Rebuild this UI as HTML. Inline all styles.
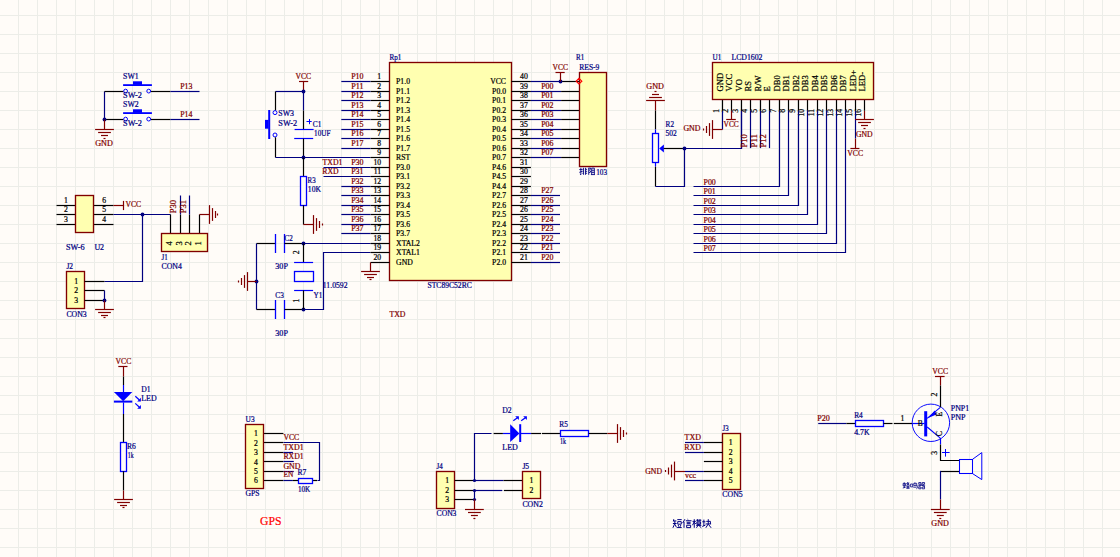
<!DOCTYPE html>
<html><head><meta charset="utf-8"><title>Schematic</title>
<style>
html,body{margin:0;padding:0;background:#FFFCF8;}
body{width:1120px;height:557px;overflow:hidden;}
svg{display:block;font-family:"Liberation Serif",serif;font-size:7.7px;}
svg text{white-space:pre;stroke-width:0.22px;}
svg path{fill:none;}
</style></head><body>
<svg width="1120" height="557" viewBox="0 0 1120 557">
<rect width="1120" height="557" fill="#FFFCF8"/>
<path d="M18.5 0V557M37.5 0V557M56.5 0V557M75.5 0V557M94.5 0V557M113.5 0V557M132.5 0V557M151.5 0V557M170.5 0V557M189.5 0V557M208.5 0V557M227.5 0V557M246.5 0V557M265.5 0V557M284.5 0V557M303.5 0V557M322.5 0V557M341.5 0V557M360.5 0V557M379.5 0V557M398.5 0V557M417.5 0V557M436.5 0V557M455.5 0V557M474.5 0V557M493.5 0V557M512.5 0V557M531.5 0V557M550.5 0V557M569.5 0V557M588.5 0V557M607.5 0V557M626.5 0V557M645.5 0V557M664.5 0V557M683.5 0V557M702.5 0V557M721.5 0V557M740.5 0V557M759.5 0V557M778.5 0V557M797.5 0V557M817.5 0V557M836.5 0V557M855.5 0V557M874.5 0V557M893.5 0V557M912.5 0V557M931.5 0V557M950.5 0V557M969.5 0V557M988.5 0V557M1007.5 0V557M1026.5 0V557M1045.5 0V557M1064.5 0V557M1083.5 0V557M1102.5 0V557M0 15.5H1120M0 34.5H1120M0 53.5H1120M0 72.5H1120M0 91.5H1120M0 110.5H1120M0 129.5H1120M0 148.5H1120M0 167.5H1120M0 186.5H1120M0 205.5H1120M0 224.5H1120M0 243.5H1120M0 262.5H1120M0 281.5H1120M0 300.5H1120M0 319.5H1120M0 338.5H1120M0 357.5H1120M0 376.5H1120M0 395.5H1120M0 414.5H1120M0 433.5H1120M0 452.5H1120M0 471.5H1120M0 490.5H1120M0 509.5H1120M0 528.5H1120M0 547.5H1120" stroke="#ECEDE8" stroke-width="1" shape-rendering="crispEdges"/>
<path d="M104.5 91.5L104.5 119.5" stroke="#000080" stroke-width="1.2"/>
<path d="M104.5 91.5L123.4 91.5" stroke="#000000" stroke-width="1.2"/>
<circle cx="125.6" cy="91.1" r="1.9" fill="none" stroke="#0000FF" stroke-width="1"/>
<circle cx="148.7" cy="91.1" r="1.9" fill="none" stroke="#0000FF" stroke-width="1"/>
<path d="M151 91.5L170.5 91.5" stroke="#000000" stroke-width="1.2"/>
<path d="M170.5 91.5L199.5 91.5" stroke="#000080" stroke-width="1.2"/>
<path d="M123.1 85.1L151.9 85.1" stroke="#0000FF" stroke-width="1.8"/>
<rect x="133" y="81.3" width="9" height="3.6" fill="#0000FF"/>
<text x="123.1" y="79.1" fill="#000080" stroke="#000080" textLength="15.6" lengthAdjust="spacingAndGlyphs">SW1</text>
<text x="123.1" y="98.4" fill="#000080" stroke="#000080" textLength="18.9" lengthAdjust="spacingAndGlyphs">SW-2</text>
<text x="180.2" y="89" fill="#800000" stroke="#800000" textLength="12.2" lengthAdjust="spacingAndGlyphs">P13</text>
<path d="M104.5 119.5L123.4 119.5" stroke="#000000" stroke-width="1.2"/>
<circle cx="125.6" cy="119.1" r="1.9" fill="none" stroke="#0000FF" stroke-width="1"/>
<circle cx="148.7" cy="119.1" r="1.9" fill="none" stroke="#0000FF" stroke-width="1"/>
<path d="M151 119.5L170.5 119.5" stroke="#000000" stroke-width="1.2"/>
<path d="M170.5 119.5L199.5 119.5" stroke="#000080" stroke-width="1.2"/>
<path d="M123.1 113.1L151.9 113.1" stroke="#0000FF" stroke-width="1.8"/>
<rect x="133" y="109.3" width="9" height="3.6" fill="#0000FF"/>
<text x="123.1" y="107.1" fill="#000080" stroke="#000080" textLength="15.6" lengthAdjust="spacingAndGlyphs">SW2</text>
<text x="123.1" y="126.4" fill="#000080" stroke="#000080" textLength="18.9" lengthAdjust="spacingAndGlyphs">SW-2</text>
<text x="180.2" y="117" fill="#800000" stroke="#800000" textLength="12.2" lengthAdjust="spacingAndGlyphs">P14</text>
<circle cx="104.5" cy="119.5" r="1.9" fill="#000080"/>
<path d="M104.5 119.5L104.5 129.5" stroke="#800000" stroke-width="1.2"/>
<path d="M95.1 129.5L113.9 129.5" stroke="#800000" stroke-width="1.2"/>
<path d="M98.1 132.5L110.9 132.5" stroke="#800000" stroke-width="1.2"/>
<path d="M101 135.5L108 135.5" stroke="#800000" stroke-width="1.2"/>
<path d="M103.5 138.5L105.5 138.5" stroke="#800000" stroke-width="1.2"/>
<text x="95.2" y="145.8" fill="#800000" stroke="#800000" textLength="17.6" lengthAdjust="spacingAndGlyphs">GND</text>
<path d="M56.5 205.5L75.6 205.5" stroke="#000000" stroke-width="1.2"/>
<path d="M93.8 205.5L113.5 205.5" stroke="#000000" stroke-width="1.2"/>
<text x="65.8" y="203.1" fill="#000000" stroke="#000000" text-anchor="middle">1</text>
<text x="104.2" y="203.1" fill="#000000" stroke="#000000" text-anchor="middle">6</text>
<path d="M56.5 214.5L75.6 214.5" stroke="#000000" stroke-width="1.2"/>
<path d="M93.8 214.5L113.5 214.5" stroke="#000000" stroke-width="1.2"/>
<text x="65.8" y="212.1" fill="#000000" stroke="#000000" text-anchor="middle">2</text>
<text x="104.2" y="212.1" fill="#000000" stroke="#000000" text-anchor="middle">5</text>
<path d="M56.5 224.5L75.6 224.5" stroke="#000000" stroke-width="1.2"/>
<path d="M93.8 224.5L113.5 224.5" stroke="#000000" stroke-width="1.2"/>
<text x="65.8" y="222.1" fill="#000000" stroke="#000000" text-anchor="middle">3</text>
<text x="104.2" y="222.1" fill="#000000" stroke="#000000" text-anchor="middle">4</text>
<rect x="75.5" y="195.5" width="18" height="37" fill="#FFFFB0" stroke="#800000" stroke-width="1.35"/>
<path d="M113.5 205.5L123.5 205.5" stroke="#800000" stroke-width="1.2"/>
<path d="M123.5 200.9L123.5 210.1" stroke="#800000" stroke-width="1.2"/>
<text x="125.5" y="206.6" fill="#800000" stroke="#800000" textLength="15.6" lengthAdjust="spacingAndGlyphs">VCC</text>
<path d="M113.5 214.5L170.5 214.5" stroke="#000080" stroke-width="1.2"/>
<circle cx="142.5" cy="214.5" r="1.9" fill="#000080"/>
<path d="M142.5 214.5L142.5 281.5L104.5 281.5" stroke="#000080" stroke-width="1.2" fill="none" stroke-linejoin="miter"/>
<text x="66" y="249.6" fill="#000080" stroke="#000080" textLength="18.7" lengthAdjust="spacingAndGlyphs">SW-6</text>
<text x="94.4" y="249.6" fill="#000080" stroke="#000080" textLength="9.7" lengthAdjust="spacingAndGlyphs">U2</text>
<path d="M170.5 214.5L170.5 233.4" stroke="#000000" stroke-width="1.2"/>
<path d="M180.5 214.5L180.5 233.4" stroke="#000000" stroke-width="1.2"/>
<path d="M189.5 214.5L189.5 233.4" stroke="#000000" stroke-width="1.2"/>
<path d="M199.5 214.5L199.5 233.4" stroke="#000000" stroke-width="1.2"/>
<path d="M180.5 195.5L180.5 214.5" stroke="#000080" stroke-width="1.2"/>
<path d="M189.5 195.5L189.5 214.5" stroke="#000080" stroke-width="1.2"/>
<rect x="161.5" y="233.5" width="46" height="18" fill="#FFFFB0" stroke="#800000" stroke-width="1.35"/>
<text x="171.7" y="245.4" fill="#000000" stroke="#000000" transform="rotate(-90 171.7 245.4)" font-size="8.5" stroke-width="0.18">4</text>
<text x="181.7" y="245.4" fill="#000000" stroke="#000000" transform="rotate(-90 181.7 245.4)" font-size="8.5" stroke-width="0.18">3</text>
<text x="190.7" y="245.4" fill="#000000" stroke="#000000" transform="rotate(-90 190.7 245.4)" font-size="8.5" stroke-width="0.18">2</text>
<text x="200.7" y="245.4" fill="#000000" stroke="#000000" transform="rotate(-90 200.7 245.4)" font-size="8.5" stroke-width="0.18">1</text>
<path d="M199.5 214.5L209.2 214.5" stroke="#800000" stroke-width="1.2"/>
<path d="M209.5 205.1L209.5 223.9" stroke="#800000" stroke-width="1.2"/>
<path d="M212.5 208.1L212.5 220.9" stroke="#800000" stroke-width="1.2"/>
<path d="M215.5 211L215.5 218" stroke="#800000" stroke-width="1.2"/>
<path d="M217.5 213.5L217.5 215.5" stroke="#800000" stroke-width="1.2"/>
<text x="175.9" y="213.3" fill="#800000" stroke="#800000" transform="rotate(-90 175.9 213.3)" textLength="13.2" lengthAdjust="spacingAndGlyphs" stroke-width="0.18">P30</text>
<text x="185.7" y="213.3" fill="#800000" stroke="#800000" transform="rotate(-90 185.7 213.3)" textLength="13.2" lengthAdjust="spacingAndGlyphs" stroke-width="0.18">P31</text>
<text x="161.5" y="260" fill="#000080" stroke="#000080" textLength="6.2" lengthAdjust="spacingAndGlyphs">J1</text>
<text x="161.5" y="268.8" fill="#000080" stroke="#000080" textLength="20.3" lengthAdjust="spacingAndGlyphs">CON4</text>
<rect x="66.5" y="271.5" width="18" height="37" fill="#FFFFB0" stroke="#800000" stroke-width="1.35"/>
<path d="M84.6 281.5L104.5 281.5" stroke="#000000" stroke-width="1.2"/>
<text x="76.2" y="284.1" fill="#000000" stroke="#000000" text-anchor="middle">1</text>
<path d="M84.6 290.5L104.5 290.5" stroke="#000000" stroke-width="1.2"/>
<text x="76.2" y="293.1" fill="#000000" stroke="#000000" text-anchor="middle">2</text>
<path d="M84.6 300.5L104.5 300.5" stroke="#000000" stroke-width="1.2"/>
<text x="76.2" y="303.1" fill="#000000" stroke="#000000" text-anchor="middle">3</text>
<path d="M104.5 290.5L104.5 300.5" stroke="#000080" stroke-width="1.2"/>
<circle cx="104.5" cy="300.5" r="1.9" fill="#000080"/>
<path d="M104.5 300.5L104.5 309.5" stroke="#800000" stroke-width="1.2"/>
<path d="M95.1 309.5L113.9 309.5" stroke="#800000" stroke-width="1.2"/>
<path d="M98.1 312.5L110.9 312.5" stroke="#800000" stroke-width="1.2"/>
<path d="M101 315.5L108 315.5" stroke="#800000" stroke-width="1.2"/>
<path d="M103.5 317.5L105.5 317.5" stroke="#800000" stroke-width="1.2"/>
<text x="66.4" y="268.9" fill="#000080" stroke="#000080" textLength="6.6" lengthAdjust="spacingAndGlyphs">J2</text>
<text x="66.4" y="316.6" fill="#000080" stroke="#000080" textLength="20.3" lengthAdjust="spacingAndGlyphs">CON3</text>
<text x="295.5" y="78.9" fill="#800000" stroke="#800000" textLength="15.6" lengthAdjust="spacingAndGlyphs">VCC</text>
<path d="M299 81.5L308.2 81.5" stroke="#800000" stroke-width="1.2"/>
<path d="M303.5 81.5L303.5 91.5" stroke="#800000" stroke-width="1.2"/>
<path d="M275.5 91.5L303.4 91.5" stroke="#000080" stroke-width="1.2"/>
<path d="M303.5 91.5L303.5 110.5" stroke="#000080" stroke-width="1.2"/>
<circle cx="303.5" cy="91.5" r="1.9" fill="#000080"/>
<path d="M303.5 110.5L303.5 129.5" stroke="#000000" stroke-width="1.2"/>
<path d="M294.6 129.5L313.6 129.5" stroke="#0000FF" stroke-width="1.2"/>
<path d="M294.2 138.5L313.2 138.5" stroke="#0000FF" stroke-width="1.2"/>
<path d="M303.5 138.7L303.5 157.5" stroke="#000000" stroke-width="1.2"/>
<path d="M275.5 91.5L275.5 110.5" stroke="#000000" stroke-width="1.2"/>
<circle cx="275" cy="112.6" r="2" fill="none" stroke="#0000FF" stroke-width="1"/>
<circle cx="275" cy="135" r="2" fill="none" stroke="#0000FF" stroke-width="1"/>
<path d="M275.5 137.3L275.5 157.5" stroke="#000000" stroke-width="1.2"/>
<path d="M269.2 110L269.2 139" stroke="#0000FF" stroke-width="2"/>
<rect x="265" y="119.9" width="3.6" height="8.8" fill="#0000FF"/>
<text x="278.3" y="115.9" fill="#000080" stroke="#000080" textLength="15.7" lengthAdjust="spacingAndGlyphs">SW3</text>
<text x="278.3" y="125.7" fill="#000080" stroke="#000080" textLength="18.8" lengthAdjust="spacingAndGlyphs">SW-2</text>
<path d="M306.5 121.5L311.7 121.5" stroke="#0000FF" stroke-width="1"/>
<path d="M309.5 119L309.5 124.2" stroke="#0000FF" stroke-width="1"/>
<text x="312.8" y="126.6" fill="#000080" stroke="#000080" textLength="8.6" lengthAdjust="spacingAndGlyphs">C1</text>
<text x="314.1" y="135.8" fill="#000080" stroke="#000080" textLength="16.3" lengthAdjust="spacingAndGlyphs">10UF</text>
<path d="M275.5 157.5L370.5 157.5" stroke="#000080" stroke-width="1.2"/>
<circle cx="303.5" cy="157.5" r="1.9" fill="#000080"/>
<path d="M303.5 157.5L303.5 176.5" stroke="#000000" stroke-width="1.2"/>
<rect x="300.5" y="176.5" width="6" height="29" fill="#FFFCF8" stroke="#0000FF" stroke-width="1.3"/>
<path d="M303.5 205.3L303.5 224.5" stroke="#000000" stroke-width="1.2"/>
<path d="M303.4 224.5L313.5 224.5" stroke="#800000" stroke-width="1.2"/>
<path d="M313.5 215.1L313.5 233.9" stroke="#800000" stroke-width="1.2"/>
<path d="M316.5 218.1L316.5 230.9" stroke="#800000" stroke-width="1.2"/>
<path d="M319.5 221L319.5 228" stroke="#800000" stroke-width="1.2"/>
<path d="M322.5 223.5L322.5 225.5" stroke="#800000" stroke-width="1.2"/>
<text x="307.6" y="182.9" fill="#000080" stroke="#000080" textLength="8" lengthAdjust="spacingAndGlyphs">R3</text>
<text x="307.8" y="192.1" fill="#000080" stroke="#000080" textLength="13.2" lengthAdjust="spacingAndGlyphs">10K</text>
<path d="M256.5 243.5L275.5 243.5" stroke="#000000" stroke-width="1.2"/>
<path d="M275.5 234L275.5 253" stroke="#0000FF" stroke-width="1.3"/>
<path d="M284.5 234L284.5 253" stroke="#0000FF" stroke-width="1.3"/>
<path d="M284.5 243.5L303.4 243.5" stroke="#000000" stroke-width="1.2"/>
<path d="M303.4 243.5L370.5 243.5" stroke="#000080" stroke-width="1.2"/>
<circle cx="303.5" cy="243.5" r="1.9" fill="#000080"/>
<text x="284.6" y="240.5" fill="#000080" stroke="#000080" textLength="8.2" lengthAdjust="spacingAndGlyphs">C2</text>
<text x="275.3" y="268.7" fill="#000080" stroke="#000080" textLength="12.6" lengthAdjust="spacingAndGlyphs">30P</text>
<path d="M256.5 243.5L256.5 309.5" stroke="#000080" stroke-width="1.2"/>
<circle cx="256.5" cy="281.5" r="1.9" fill="#000080"/>
<path d="M256.5 281.5L247.5 281.5" stroke="#800000" stroke-width="1.2"/>
<path d="M247.5 272.1L247.5 290.9" stroke="#800000" stroke-width="1.2"/>
<path d="M244.5 275.1L244.5 287.9" stroke="#800000" stroke-width="1.2"/>
<path d="M241.5 278L241.5 285" stroke="#800000" stroke-width="1.2"/>
<path d="M238.5 280.5L238.5 282.5" stroke="#800000" stroke-width="1.2"/>
<path d="M256.5 309.5L275.5 309.5" stroke="#000000" stroke-width="1.2"/>
<path d="M275.5 300L275.5 319" stroke="#0000FF" stroke-width="1.3"/>
<path d="M284.5 300L284.5 319" stroke="#0000FF" stroke-width="1.3"/>
<path d="M284.5 309.5L303.4 309.5" stroke="#000000" stroke-width="1.2"/>
<path d="M303.5 309.5L323.5 309.5L323.5 252.5L370.5 252.5" stroke="#000080" stroke-width="1.2" fill="none" stroke-linejoin="miter"/>
<circle cx="303.5" cy="309.5" r="1.9" fill="#000080"/>
<text x="275.3" y="297.8" fill="#000080" stroke="#000080" textLength="8.5" lengthAdjust="spacingAndGlyphs">C3</text>
<text x="275.3" y="335.9" fill="#000080" stroke="#000080" textLength="12.6" lengthAdjust="spacingAndGlyphs">30P</text>
<path d="M303.5 243.5L303.5 262.5" stroke="#000000" stroke-width="1.2"/>
<path d="M294.1 262.5L313.1 262.5" stroke="#0000FF" stroke-width="1.2"/>
<rect x="294.5" y="271.5" width="19" height="10" fill="#FFFCF8" stroke="#0000FF" stroke-width="1.3"/>
<path d="M294.1 290.5L313.1 290.5" stroke="#0000FF" stroke-width="1.2"/>
<path d="M303.5 290.4L303.5 309.5" stroke="#000000" stroke-width="1.2"/>
<text x="313.6" y="297.8" fill="#000080" stroke="#000080" textLength="8.8" lengthAdjust="spacingAndGlyphs">Y1</text>
<text x="322.8" y="288" fill="#000080" stroke="#000080" textLength="24.8" lengthAdjust="spacingAndGlyphs">11.0592</text>
<text x="299.4" y="254.2" fill="#000000" stroke="#000000" transform="rotate(-90 299.4 254.2)" stroke-width="0.18">2</text>
<text x="299.4" y="302.6" fill="#000000" stroke="#000000" transform="rotate(-90 299.4 302.6)" stroke-width="0.18">1</text>
<rect x="389.5" y="62.5" width="122" height="218" fill="#FFFFB0" stroke="#800000" stroke-width="1.35"/>
<path d="M370.5 81.5L389.5 81.5" stroke="#000000" stroke-width="1.2"/>
<text x="381.2" y="78.6" fill="#000000" stroke="#000000" text-anchor="end">1</text>
<text x="396.1" y="83.6" fill="#000000" stroke="#000000">P1.0</text>
<path d="M341.3 81.5L370.5 81.5" stroke="#000080" stroke-width="1.2"/>
<text x="351.2" y="78.8" fill="#800000" stroke="#800000" textLength="12.4" lengthAdjust="spacingAndGlyphs">P10</text>
<path d="M511.4 81.5L530.9 81.5" stroke="#000000" stroke-width="1.2"/>
<text x="520" y="78.6" fill="#000000" stroke="#000000" textLength="7.8" lengthAdjust="spacingAndGlyphs">40</text>
<text x="506" y="83.6" fill="#000000" stroke="#000000" text-anchor="end">VCC</text>
<path d="M370.5 91.5L389.5 91.5" stroke="#000000" stroke-width="1.2"/>
<text x="381.2" y="88.6" fill="#000000" stroke="#000000" text-anchor="end">2</text>
<text x="396.1" y="93.6" fill="#000000" stroke="#000000">P1.1</text>
<path d="M341.3 91.5L370.5 91.5" stroke="#000080" stroke-width="1.2"/>
<text x="351.2" y="88.8" fill="#800000" stroke="#800000" textLength="12.4" lengthAdjust="spacingAndGlyphs">P11</text>
<path d="M511.4 91.5L530.9 91.5" stroke="#000000" stroke-width="1.2"/>
<text x="520" y="88.6" fill="#000000" stroke="#000000" textLength="7.8" lengthAdjust="spacingAndGlyphs">39</text>
<text x="506" y="93.6" fill="#000000" stroke="#000000" text-anchor="end">P0.0</text>
<path d="M370.5 100.5L389.5 100.5" stroke="#000000" stroke-width="1.2"/>
<text x="381.2" y="97.6" fill="#000000" stroke="#000000" text-anchor="end">3</text>
<text x="396.1" y="102.6" fill="#000000" stroke="#000000">P1.2</text>
<path d="M341.3 100.5L370.5 100.5" stroke="#000080" stroke-width="1.2"/>
<text x="351.2" y="97.8" fill="#800000" stroke="#800000" textLength="12.4" lengthAdjust="spacingAndGlyphs">P12</text>
<path d="M511.4 100.5L530.9 100.5" stroke="#000000" stroke-width="1.2"/>
<text x="520" y="97.6" fill="#000000" stroke="#000000" textLength="7.8" lengthAdjust="spacingAndGlyphs">38</text>
<text x="506" y="102.6" fill="#000000" stroke="#000000" text-anchor="end">P0.1</text>
<path d="M370.5 110.5L389.5 110.5" stroke="#000000" stroke-width="1.2"/>
<text x="381.2" y="107.6" fill="#000000" stroke="#000000" text-anchor="end">4</text>
<text x="396.1" y="112.6" fill="#000000" stroke="#000000">P1.3</text>
<path d="M341.3 110.5L370.5 110.5" stroke="#000080" stroke-width="1.2"/>
<text x="351.2" y="107.8" fill="#800000" stroke="#800000" textLength="12.4" lengthAdjust="spacingAndGlyphs">P13</text>
<path d="M511.4 110.5L530.9 110.5" stroke="#000000" stroke-width="1.2"/>
<text x="520" y="107.6" fill="#000000" stroke="#000000" textLength="7.8" lengthAdjust="spacingAndGlyphs">37</text>
<text x="506" y="112.6" fill="#000000" stroke="#000000" text-anchor="end">P0.2</text>
<path d="M370.5 119.5L389.5 119.5" stroke="#000000" stroke-width="1.2"/>
<text x="381.2" y="116.6" fill="#000000" stroke="#000000" text-anchor="end">5</text>
<text x="396.1" y="121.6" fill="#000000" stroke="#000000">P1.4</text>
<path d="M341.3 119.5L370.5 119.5" stroke="#000080" stroke-width="1.2"/>
<text x="351.2" y="116.8" fill="#800000" stroke="#800000" textLength="12.4" lengthAdjust="spacingAndGlyphs">P14</text>
<path d="M511.4 119.5L530.9 119.5" stroke="#000000" stroke-width="1.2"/>
<text x="520" y="116.6" fill="#000000" stroke="#000000" textLength="7.8" lengthAdjust="spacingAndGlyphs">36</text>
<text x="506" y="121.6" fill="#000000" stroke="#000000" text-anchor="end">P0.3</text>
<path d="M370.5 129.5L389.5 129.5" stroke="#000000" stroke-width="1.2"/>
<text x="381.2" y="126.6" fill="#000000" stroke="#000000" text-anchor="end">6</text>
<text x="396.1" y="131.6" fill="#000000" stroke="#000000">P1.5</text>
<path d="M341.3 129.5L370.5 129.5" stroke="#000080" stroke-width="1.2"/>
<text x="351.2" y="126.8" fill="#800000" stroke="#800000" textLength="12.4" lengthAdjust="spacingAndGlyphs">P15</text>
<path d="M511.4 129.5L530.9 129.5" stroke="#000000" stroke-width="1.2"/>
<text x="520" y="126.6" fill="#000000" stroke="#000000" textLength="7.8" lengthAdjust="spacingAndGlyphs">35</text>
<text x="506" y="131.6" fill="#000000" stroke="#000000" text-anchor="end">P0.4</text>
<path d="M370.5 138.5L389.5 138.5" stroke="#000000" stroke-width="1.2"/>
<text x="381.2" y="135.6" fill="#000000" stroke="#000000" text-anchor="end">7</text>
<text x="396.1" y="140.6" fill="#000000" stroke="#000000">P1.6</text>
<path d="M341.3 138.5L370.5 138.5" stroke="#000080" stroke-width="1.2"/>
<text x="351.2" y="135.8" fill="#800000" stroke="#800000" textLength="12.4" lengthAdjust="spacingAndGlyphs">P16</text>
<path d="M511.4 138.5L530.9 138.5" stroke="#000000" stroke-width="1.2"/>
<text x="520" y="135.6" fill="#000000" stroke="#000000" textLength="7.8" lengthAdjust="spacingAndGlyphs">34</text>
<text x="506" y="140.6" fill="#000000" stroke="#000000" text-anchor="end">P0.5</text>
<path d="M370.5 148.5L389.5 148.5" stroke="#000000" stroke-width="1.2"/>
<text x="381.2" y="145.6" fill="#000000" stroke="#000000" text-anchor="end">8</text>
<text x="396.1" y="150.6" fill="#000000" stroke="#000000">P1.7</text>
<path d="M341.3 148.5L370.5 148.5" stroke="#000080" stroke-width="1.2"/>
<text x="351.2" y="145.8" fill="#800000" stroke="#800000" textLength="12.4" lengthAdjust="spacingAndGlyphs">P17</text>
<path d="M511.4 148.5L530.9 148.5" stroke="#000000" stroke-width="1.2"/>
<text x="520" y="145.6" fill="#000000" stroke="#000000" textLength="7.8" lengthAdjust="spacingAndGlyphs">33</text>
<text x="506" y="150.6" fill="#000000" stroke="#000000" text-anchor="end">P0.6</text>
<path d="M370.5 157.5L389.5 157.5" stroke="#000000" stroke-width="1.2"/>
<text x="381.2" y="154.6" fill="#000000" stroke="#000000" text-anchor="end">9</text>
<text x="396.1" y="159.6" fill="#000000" stroke="#000000">RST</text>
<path d="M511.4 157.5L530.9 157.5" stroke="#000000" stroke-width="1.2"/>
<text x="520" y="154.6" fill="#000000" stroke="#000000" textLength="7.8" lengthAdjust="spacingAndGlyphs">32</text>
<text x="506" y="159.6" fill="#000000" stroke="#000000" text-anchor="end">P0.7</text>
<path d="M370.5 167.5L389.5 167.5" stroke="#000000" stroke-width="1.2"/>
<text x="381.2" y="164.6" fill="#000000" stroke="#000000" text-anchor="end">10</text>
<text x="396.1" y="169.6" fill="#000000" stroke="#000000">P3.0</text>
<path d="M323.5 167.5L370.5 167.5" stroke="#000080" stroke-width="1.2"/>
<text x="351.2" y="164.8" fill="#800000" stroke="#800000" textLength="12.4" lengthAdjust="spacingAndGlyphs">P30</text>
<path d="M511.4 167.5L530.9 167.5" stroke="#000000" stroke-width="1.2"/>
<text x="520" y="164.6" fill="#000000" stroke="#000000" textLength="7.8" lengthAdjust="spacingAndGlyphs">31</text>
<text x="506" y="169.6" fill="#000000" stroke="#000000" text-anchor="end">P4.6</text>
<path d="M370.5 176.5L389.5 176.5" stroke="#000000" stroke-width="1.2"/>
<text x="381.2" y="173.6" fill="#000000" stroke="#000000" text-anchor="end">11</text>
<text x="396.1" y="178.6" fill="#000000" stroke="#000000">P3.1</text>
<path d="M323.5 176.5L370.5 176.5" stroke="#000080" stroke-width="1.2"/>
<text x="351.2" y="173.8" fill="#800000" stroke="#800000" textLength="12.4" lengthAdjust="spacingAndGlyphs">P31</text>
<path d="M511.4 176.5L530.9 176.5" stroke="#000000" stroke-width="1.2"/>
<text x="520" y="173.6" fill="#000000" stroke="#000000" textLength="7.8" lengthAdjust="spacingAndGlyphs">30</text>
<text x="506" y="178.6" fill="#000000" stroke="#000000" text-anchor="end">P4.5</text>
<path d="M370.5 186.5L389.5 186.5" stroke="#000000" stroke-width="1.2"/>
<text x="381.2" y="183.6" fill="#000000" stroke="#000000" text-anchor="end">12</text>
<text x="396.1" y="188.6" fill="#000000" stroke="#000000">P3.2</text>
<path d="M341.3 186.5L370.5 186.5" stroke="#000080" stroke-width="1.2"/>
<text x="351.2" y="183.8" fill="#800000" stroke="#800000" textLength="12.4" lengthAdjust="spacingAndGlyphs">P32</text>
<path d="M511.4 186.5L530.9 186.5" stroke="#000000" stroke-width="1.2"/>
<text x="520" y="183.6" fill="#000000" stroke="#000000" textLength="7.8" lengthAdjust="spacingAndGlyphs">29</text>
<text x="506" y="188.6" fill="#000000" stroke="#000000" text-anchor="end">P4.4</text>
<path d="M370.5 195.5L389.5 195.5" stroke="#000000" stroke-width="1.2"/>
<text x="381.2" y="192.6" fill="#000000" stroke="#000000" text-anchor="end">13</text>
<text x="396.1" y="197.6" fill="#000000" stroke="#000000">P3.3</text>
<path d="M341.3 195.5L370.5 195.5" stroke="#000080" stroke-width="1.2"/>
<text x="351.2" y="192.8" fill="#800000" stroke="#800000" textLength="12.4" lengthAdjust="spacingAndGlyphs">P33</text>
<path d="M511.4 195.5L530.9 195.5" stroke="#000000" stroke-width="1.2"/>
<text x="520" y="192.6" fill="#000000" stroke="#000000" textLength="7.8" lengthAdjust="spacingAndGlyphs">28</text>
<text x="506" y="197.6" fill="#000000" stroke="#000000" text-anchor="end">P2.7</text>
<path d="M370.5 205.5L389.5 205.5" stroke="#000000" stroke-width="1.2"/>
<text x="381.2" y="202.6" fill="#000000" stroke="#000000" text-anchor="end">14</text>
<text x="396.1" y="207.6" fill="#000000" stroke="#000000">P3.4</text>
<path d="M341.3 205.5L370.5 205.5" stroke="#000080" stroke-width="1.2"/>
<text x="351.2" y="202.8" fill="#800000" stroke="#800000" textLength="12.4" lengthAdjust="spacingAndGlyphs">P34</text>
<path d="M511.4 205.5L530.9 205.5" stroke="#000000" stroke-width="1.2"/>
<text x="520" y="202.6" fill="#000000" stroke="#000000" textLength="7.8" lengthAdjust="spacingAndGlyphs">27</text>
<text x="506" y="207.6" fill="#000000" stroke="#000000" text-anchor="end">P2.6</text>
<path d="M370.5 214.5L389.5 214.5" stroke="#000000" stroke-width="1.2"/>
<text x="381.2" y="211.6" fill="#000000" stroke="#000000" text-anchor="end">15</text>
<text x="396.1" y="216.6" fill="#000000" stroke="#000000">P3.5</text>
<path d="M341.3 214.5L370.5 214.5" stroke="#000080" stroke-width="1.2"/>
<text x="351.2" y="211.8" fill="#800000" stroke="#800000" textLength="12.4" lengthAdjust="spacingAndGlyphs">P35</text>
<path d="M511.4 214.5L530.9 214.5" stroke="#000000" stroke-width="1.2"/>
<text x="520" y="211.6" fill="#000000" stroke="#000000" textLength="7.8" lengthAdjust="spacingAndGlyphs">26</text>
<text x="506" y="216.6" fill="#000000" stroke="#000000" text-anchor="end">P2.5</text>
<path d="M370.5 224.5L389.5 224.5" stroke="#000000" stroke-width="1.2"/>
<text x="381.2" y="221.6" fill="#000000" stroke="#000000" text-anchor="end">16</text>
<text x="396.1" y="226.6" fill="#000000" stroke="#000000">P3.6</text>
<path d="M341.3 224.5L370.5 224.5" stroke="#000080" stroke-width="1.2"/>
<text x="351.2" y="221.8" fill="#800000" stroke="#800000" textLength="12.4" lengthAdjust="spacingAndGlyphs">P36</text>
<path d="M511.4 224.5L530.9 224.5" stroke="#000000" stroke-width="1.2"/>
<text x="520" y="221.6" fill="#000000" stroke="#000000" textLength="7.8" lengthAdjust="spacingAndGlyphs">25</text>
<text x="506" y="226.6" fill="#000000" stroke="#000000" text-anchor="end">P2.4</text>
<path d="M370.5 233.5L389.5 233.5" stroke="#000000" stroke-width="1.2"/>
<text x="381.2" y="230.6" fill="#000000" stroke="#000000" text-anchor="end">17</text>
<text x="396.1" y="235.6" fill="#000000" stroke="#000000">P3.7</text>
<path d="M341.3 233.5L370.5 233.5" stroke="#000080" stroke-width="1.2"/>
<text x="351.2" y="230.8" fill="#800000" stroke="#800000" textLength="12.4" lengthAdjust="spacingAndGlyphs">P37</text>
<path d="M511.4 233.5L530.9 233.5" stroke="#000000" stroke-width="1.2"/>
<text x="520" y="230.6" fill="#000000" stroke="#000000" textLength="7.8" lengthAdjust="spacingAndGlyphs">24</text>
<text x="506" y="235.6" fill="#000000" stroke="#000000" text-anchor="end">P2.3</text>
<path d="M370.5 243.5L389.5 243.5" stroke="#000000" stroke-width="1.2"/>
<text x="381.2" y="240.6" fill="#000000" stroke="#000000" text-anchor="end">18</text>
<text x="396.1" y="245.6" fill="#000000" stroke="#000000">XTAL2</text>
<path d="M511.4 243.5L530.9 243.5" stroke="#000000" stroke-width="1.2"/>
<text x="520" y="240.6" fill="#000000" stroke="#000000" textLength="7.8" lengthAdjust="spacingAndGlyphs">23</text>
<text x="506" y="245.6" fill="#000000" stroke="#000000" text-anchor="end">P2.2</text>
<path d="M370.5 252.5L389.5 252.5" stroke="#000000" stroke-width="1.2"/>
<text x="381.2" y="249.6" fill="#000000" stroke="#000000" text-anchor="end">19</text>
<text x="396.1" y="254.6" fill="#000000" stroke="#000000">XTAL1</text>
<path d="M511.4 252.5L530.9 252.5" stroke="#000000" stroke-width="1.2"/>
<text x="520" y="249.6" fill="#000000" stroke="#000000" textLength="7.8" lengthAdjust="spacingAndGlyphs">22</text>
<text x="506" y="254.6" fill="#000000" stroke="#000000" text-anchor="end">P2.1</text>
<path d="M370.5 262.5L389.5 262.5" stroke="#000000" stroke-width="1.2"/>
<text x="381.2" y="259.6" fill="#000000" stroke="#000000" text-anchor="end">20</text>
<text x="396.1" y="264.6" fill="#000000" stroke="#000000">GND</text>
<path d="M511.4 262.5L530.9 262.5" stroke="#000000" stroke-width="1.2"/>
<text x="520" y="259.6" fill="#000000" stroke="#000000" textLength="7.8" lengthAdjust="spacingAndGlyphs">21</text>
<text x="506" y="264.6" fill="#000000" stroke="#000000" text-anchor="end">P2.0</text>
<text x="322.6" y="165" fill="#800000" stroke="#800000" textLength="19.8" lengthAdjust="spacingAndGlyphs">TXD1</text>
<text x="322.3" y="173.7" fill="#800000" stroke="#800000" textLength="16.3" lengthAdjust="spacingAndGlyphs">RXD</text>
<path d="M370.5 262.5L370.5 271.5" stroke="#800000" stroke-width="1.2"/>
<path d="M361.1 271.5L379.9 271.5" stroke="#800000" stroke-width="1.2"/>
<path d="M364.1 274.5L376.9 274.5" stroke="#800000" stroke-width="1.2"/>
<path d="M367 277.5L374 277.5" stroke="#800000" stroke-width="1.2"/>
<path d="M369.5 279.5L371.5 279.5" stroke="#800000" stroke-width="1.2"/>
<path d="M530.9 81.5L560.3 81.5" stroke="#000080" stroke-width="1.2"/>
<path d="M560.3 81.5L579.7 81.5" stroke="#000000" stroke-width="1.2"/>
<path d="M530.9 91.5L561.1 91.5" stroke="#000080" stroke-width="1.2"/>
<path d="M561.1 91.5L579.7 91.5" stroke="#000000" stroke-width="1.2"/>
<text x="541.2" y="89.1" fill="#800000" stroke="#800000" textLength="12.3" lengthAdjust="spacingAndGlyphs">P00</text>
<path d="M530.9 100.5L561.1 100.5" stroke="#000080" stroke-width="1.2"/>
<path d="M561.1 100.5L579.7 100.5" stroke="#000000" stroke-width="1.2"/>
<text x="541.2" y="98.1" fill="#800000" stroke="#800000" textLength="12.3" lengthAdjust="spacingAndGlyphs">P01</text>
<path d="M530.9 110.5L561.1 110.5" stroke="#000080" stroke-width="1.2"/>
<path d="M561.1 110.5L579.7 110.5" stroke="#000000" stroke-width="1.2"/>
<text x="541.2" y="108.1" fill="#800000" stroke="#800000" textLength="12.3" lengthAdjust="spacingAndGlyphs">P02</text>
<path d="M530.9 119.5L561.1 119.5" stroke="#000080" stroke-width="1.2"/>
<path d="M561.1 119.5L579.7 119.5" stroke="#000000" stroke-width="1.2"/>
<text x="541.2" y="117.1" fill="#800000" stroke="#800000" textLength="12.3" lengthAdjust="spacingAndGlyphs">P03</text>
<path d="M530.9 129.5L561.1 129.5" stroke="#000080" stroke-width="1.2"/>
<path d="M561.1 129.5L579.7 129.5" stroke="#000000" stroke-width="1.2"/>
<text x="541.2" y="127.1" fill="#800000" stroke="#800000" textLength="12.3" lengthAdjust="spacingAndGlyphs">P04</text>
<path d="M530.9 138.5L561.1 138.5" stroke="#000080" stroke-width="1.2"/>
<path d="M561.1 138.5L579.7 138.5" stroke="#000000" stroke-width="1.2"/>
<text x="541.2" y="136.1" fill="#800000" stroke="#800000" textLength="12.3" lengthAdjust="spacingAndGlyphs">P05</text>
<path d="M530.9 148.5L561.1 148.5" stroke="#000080" stroke-width="1.2"/>
<path d="M561.1 148.5L579.7 148.5" stroke="#000000" stroke-width="1.2"/>
<text x="541.2" y="146.1" fill="#800000" stroke="#800000" textLength="12.3" lengthAdjust="spacingAndGlyphs">P06</text>
<path d="M530.9 157.5L561.1 157.5" stroke="#000080" stroke-width="1.2"/>
<path d="M561.1 157.5L579.7 157.5" stroke="#000000" stroke-width="1.2"/>
<text x="541.2" y="155.1" fill="#800000" stroke="#800000" textLength="12.3" lengthAdjust="spacingAndGlyphs">P07</text>
<path d="M530.9 195.5L560 195.5" stroke="#000080" stroke-width="1.2"/>
<text x="541.2" y="192.7" fill="#800000" stroke="#800000" textLength="12.3" lengthAdjust="spacingAndGlyphs">P27</text>
<path d="M530.9 205.5L560 205.5" stroke="#000080" stroke-width="1.2"/>
<text x="541.2" y="202.7" fill="#800000" stroke="#800000" textLength="12.3" lengthAdjust="spacingAndGlyphs">P26</text>
<path d="M530.9 214.5L560 214.5" stroke="#000080" stroke-width="1.2"/>
<text x="541.2" y="211.7" fill="#800000" stroke="#800000" textLength="12.3" lengthAdjust="spacingAndGlyphs">P25</text>
<path d="M530.9 224.5L560 224.5" stroke="#000080" stroke-width="1.2"/>
<text x="541.2" y="221.7" fill="#800000" stroke="#800000" textLength="12.3" lengthAdjust="spacingAndGlyphs">P24</text>
<path d="M530.9 233.5L560 233.5" stroke="#000080" stroke-width="1.2"/>
<text x="541.2" y="230.7" fill="#800000" stroke="#800000" textLength="12.3" lengthAdjust="spacingAndGlyphs">P23</text>
<path d="M530.9 243.5L560 243.5" stroke="#000080" stroke-width="1.2"/>
<text x="541.2" y="240.7" fill="#800000" stroke="#800000" textLength="12.3" lengthAdjust="spacingAndGlyphs">P22</text>
<path d="M530.9 252.5L560 252.5" stroke="#000080" stroke-width="1.2"/>
<text x="541.2" y="249.7" fill="#800000" stroke="#800000" textLength="12.3" lengthAdjust="spacingAndGlyphs">P21</text>
<path d="M530.9 262.5L560 262.5" stroke="#000080" stroke-width="1.2"/>
<text x="541.2" y="259.7" fill="#800000" stroke="#800000" textLength="12.3" lengthAdjust="spacingAndGlyphs">P20</text>
<circle cx="560.5" cy="81.5" r="1.9" fill="#000080"/>
<path d="M560.5 81.5L560.5 72.7" stroke="#800000" stroke-width="1.2"/>
<path d="M555.5 72.5L564.7 72.5" stroke="#800000" stroke-width="1.2"/>
<text x="552.6" y="69.9" fill="#800000" stroke="#800000" textLength="15.4" lengthAdjust="spacingAndGlyphs">VCC</text>
<rect x="579.5" y="72.5" width="27" height="94" fill="#FFFFB0" stroke="#800000" stroke-width="1.35"/>
<path d="M576.2 81.2L579 78.4L581.8 81.2L579 84Z" fill="none" stroke="#FF0000" stroke-width="1.2"/>
<text x="389.5" y="60.1" fill="#000080" stroke="#000080" textLength="11.9" lengthAdjust="spacingAndGlyphs">Rp1</text>
<text x="576.1" y="59.9" fill="#000080" stroke="#000080" textLength="8.2" lengthAdjust="spacingAndGlyphs">R1</text>
<text x="579.3" y="69.9" fill="#000080" stroke="#000080" textLength="20.1" lengthAdjust="spacingAndGlyphs">RES-9</text>
<text x="427.5" y="287.9" fill="#000080" stroke="#000080" textLength="44.3" lengthAdjust="spacingAndGlyphs">STC89C52RC</text>
<text x="389.4" y="316.7" fill="#800000" stroke="#800000" textLength="16" lengthAdjust="spacingAndGlyphs">TXD</text>
<path d="M646.1 100.5L664.9 100.5" stroke="#800000" stroke-width="1.2"/>
<path d="M649.1 97.5L661.9 97.5" stroke="#800000" stroke-width="1.2"/>
<path d="M652 94.5L659 94.5" stroke="#800000" stroke-width="1.2"/>
<path d="M654.5 91.5L656.5 91.5" stroke="#800000" stroke-width="1.2"/>
<text x="646.3" y="88.9" fill="#800000" stroke="#800000" textLength="17.6" lengthAdjust="spacingAndGlyphs">GND</text>
<path d="M655.5 100.5L655.5 110.5" stroke="#800000" stroke-width="1.2"/>
<path d="M655.5 110.5L655.5 129.5" stroke="#000000" stroke-width="1.2"/>
<path d="M655.5 129.5L655.5 133.3" stroke="#0000FF" stroke-width="1.2"/>
<rect x="652.5" y="133.5" width="6" height="29" fill="#FFFCF8" stroke="#0000FF" stroke-width="1.3"/>
<path d="M655.5 162.2L655.5 166.7" stroke="#0000FF" stroke-width="1.2"/>
<path d="M655.5 166.7L655.5 186.5" stroke="#000000" stroke-width="1.2"/>
<path d="M655.5 186.5L684.5 186.5L684.5 148.5" stroke="#000080" stroke-width="1.2" fill="none" stroke-linejoin="miter"/>
<polygon points="659.2,148.5 663.9,144.6 663.9,152.4" fill="#0000FF"/>
<path d="M663.7 148.5L684.5 148.5" stroke="#000000" stroke-width="1.2"/>
<path d="M684.5 148.5L741.5 148.5L741.5 110.5" stroke="#000080" stroke-width="1.2" fill="none" stroke-linejoin="miter"/>
<circle cx="684.5" cy="148.5" r="1.9" fill="#000080"/>
<text x="665.6" y="126.6" fill="#000080" stroke="#000080" textLength="8.4" lengthAdjust="spacingAndGlyphs">R2</text>
<text x="665.6" y="136.2" fill="#000080" stroke="#000080" textLength="11.2" lengthAdjust="spacingAndGlyphs">502</text>
<path d="M722.5 99.2L722.5 110.8" stroke="#000000" stroke-width="1.2"/>
<path d="M731.5 99.2L731.5 110.8" stroke="#000000" stroke-width="1.2"/>
<path d="M741.5 99.2L741.5 110.8" stroke="#000000" stroke-width="1.2"/>
<path d="M750.5 99.2L750.5 110.8" stroke="#000000" stroke-width="1.2"/>
<path d="M760.5 99.2L760.5 110.8" stroke="#000000" stroke-width="1.2"/>
<path d="M769.5 99.2L769.5 110.8" stroke="#000000" stroke-width="1.2"/>
<path d="M779.5 99.2L779.5 110.8" stroke="#000000" stroke-width="1.2"/>
<path d="M788.5 99.2L788.5 110.8" stroke="#000000" stroke-width="1.2"/>
<path d="M798.5 99.2L798.5 110.8" stroke="#000000" stroke-width="1.2"/>
<path d="M807.5 99.2L807.5 110.8" stroke="#000000" stroke-width="1.2"/>
<path d="M817.5 99.2L817.5 110.8" stroke="#000000" stroke-width="1.2"/>
<path d="M826.5 99.2L826.5 110.8" stroke="#000000" stroke-width="1.2"/>
<path d="M836.5 99.2L836.5 110.8" stroke="#000000" stroke-width="1.2"/>
<path d="M845.5 99.2L845.5 110.8" stroke="#000000" stroke-width="1.2"/>
<path d="M855.5 99.2L855.5 110.8" stroke="#000000" stroke-width="1.2"/>
<path d="M864.5 99.2L864.5 110.8" stroke="#000000" stroke-width="1.2"/>
<rect x="712.5" y="62.5" width="161" height="37" fill="#FFFFB0" stroke="#800000" stroke-width="1.35"/>
<text x="723" y="91.5" fill="#000000" stroke="#000000" transform="rotate(-90 723 91.5)" font-size="8.6" stroke-width="0.18">GND</text>
<text x="719.1" y="108.8" fill="#000000" stroke="#000000" text-anchor="end" transform="rotate(-90 719.1 108.8)" stroke-width="0.18">1</text>
<text x="732" y="91.5" fill="#000000" stroke="#000000" transform="rotate(-90 732 91.5)" font-size="8.6" stroke-width="0.18">VCC</text>
<text x="728.1" y="108.8" fill="#000000" stroke="#000000" text-anchor="end" transform="rotate(-90 728.1 108.8)" stroke-width="0.18">2</text>
<text x="742" y="91.5" fill="#000000" stroke="#000000" transform="rotate(-90 742 91.5)" font-size="8.6" stroke-width="0.18">VO</text>
<text x="738.1" y="108.8" fill="#000000" stroke="#000000" text-anchor="end" transform="rotate(-90 738.1 108.8)" stroke-width="0.18">3</text>
<text x="751" y="91.5" fill="#000000" stroke="#000000" transform="rotate(-90 751 91.5)" font-size="8.6" stroke-width="0.18">RS</text>
<text x="747.1" y="108.8" fill="#000000" stroke="#000000" text-anchor="end" transform="rotate(-90 747.1 108.8)" stroke-width="0.18">4</text>
<text x="761" y="91.5" fill="#000000" stroke="#000000" transform="rotate(-90 761 91.5)" font-size="8.6" stroke-width="0.18">R/W</text>
<text x="757.1" y="108.8" fill="#000000" stroke="#000000" text-anchor="end" transform="rotate(-90 757.1 108.8)" stroke-width="0.18">5</text>
<text x="770" y="91.5" fill="#000000" stroke="#000000" transform="rotate(-90 770 91.5)" font-size="8.6" stroke-width="0.18">E</text>
<text x="766.1" y="108.8" fill="#000000" stroke="#000000" text-anchor="end" transform="rotate(-90 766.1 108.8)" stroke-width="0.18">6</text>
<text x="780" y="91.5" fill="#000000" stroke="#000000" transform="rotate(-90 780 91.5)" font-size="8.6" stroke-width="0.18">DB0</text>
<text x="776.1" y="108.8" fill="#000000" stroke="#000000" text-anchor="end" transform="rotate(-90 776.1 108.8)" stroke-width="0.18">7</text>
<text x="789" y="91.5" fill="#000000" stroke="#000000" transform="rotate(-90 789 91.5)" font-size="8.6" stroke-width="0.18">DB1</text>
<text x="785.1" y="108.8" fill="#000000" stroke="#000000" text-anchor="end" transform="rotate(-90 785.1 108.8)" stroke-width="0.18">8</text>
<text x="799" y="91.5" fill="#000000" stroke="#000000" transform="rotate(-90 799 91.5)" font-size="8.6" stroke-width="0.18">DB2</text>
<text x="795.1" y="108.8" fill="#000000" stroke="#000000" text-anchor="end" transform="rotate(-90 795.1 108.8)" stroke-width="0.18">9</text>
<text x="808" y="91.5" fill="#000000" stroke="#000000" transform="rotate(-90 808 91.5)" font-size="8.6" stroke-width="0.18">DB3</text>
<text x="804.1" y="108.8" fill="#000000" stroke="#000000" text-anchor="end" transform="rotate(-90 804.1 108.8)" stroke-width="0.18">10</text>
<text x="818" y="91.5" fill="#000000" stroke="#000000" transform="rotate(-90 818 91.5)" font-size="8.6" stroke-width="0.18">DB4</text>
<text x="814.1" y="108.8" fill="#000000" stroke="#000000" text-anchor="end" transform="rotate(-90 814.1 108.8)" stroke-width="0.18">11</text>
<text x="827" y="91.5" fill="#000000" stroke="#000000" transform="rotate(-90 827 91.5)" font-size="8.6" stroke-width="0.18">DB5</text>
<text x="823.1" y="108.8" fill="#000000" stroke="#000000" text-anchor="end" transform="rotate(-90 823.1 108.8)" stroke-width="0.18">12</text>
<text x="837" y="91.5" fill="#000000" stroke="#000000" transform="rotate(-90 837 91.5)" font-size="8.6" stroke-width="0.18">DB6</text>
<text x="833.1" y="108.8" fill="#000000" stroke="#000000" text-anchor="end" transform="rotate(-90 833.1 108.8)" stroke-width="0.18">13</text>
<text x="846" y="91.5" fill="#000000" stroke="#000000" transform="rotate(-90 846 91.5)" font-size="8.6" stroke-width="0.18">DB7</text>
<text x="842.1" y="108.8" fill="#000000" stroke="#000000" text-anchor="end" transform="rotate(-90 842.1 108.8)" stroke-width="0.18">14</text>
<text x="856" y="91.5" fill="#000000" stroke="#000000" transform="rotate(-90 856 91.5)" font-size="8.6" stroke-width="0.18">LED+</text>
<text x="852.1" y="108.8" fill="#000000" stroke="#000000" text-anchor="end" transform="rotate(-90 852.1 108.8)" stroke-width="0.18">15</text>
<text x="865" y="91.5" fill="#000000" stroke="#000000" transform="rotate(-90 865 91.5)" font-size="8.6" stroke-width="0.18">LED-</text>
<text x="861.1" y="108.8" fill="#000000" stroke="#000000" text-anchor="end" transform="rotate(-90 861.1 108.8)" stroke-width="0.18">16</text>
<text x="712.6" y="59.9" fill="#000080" stroke="#000080" textLength="8.8" lengthAdjust="spacingAndGlyphs">U1</text>
<text x="731.4" y="59.9" fill="#000080" stroke="#000080" textLength="31.1" lengthAdjust="spacingAndGlyphs">LCD1602</text>
<path d="M722.5 110.8L722.5 129.5" stroke="#000080" stroke-width="1.2"/>
<path d="M722.5 129.5L712.5 129.5" stroke="#800000" stroke-width="1.2"/>
<path d="M712.5 120.1L712.5 138.9" stroke="#800000" stroke-width="1.2"/>
<path d="M709.5 123.1L709.5 135.9" stroke="#800000" stroke-width="1.2"/>
<path d="M706.5 126L706.5 133" stroke="#800000" stroke-width="1.2"/>
<path d="M703.5 128.5L703.5 130.5" stroke="#800000" stroke-width="1.2"/>
<text x="683.4" y="130.8" fill="#800000" stroke="#800000" textLength="17" lengthAdjust="spacingAndGlyphs">GND</text>
<path d="M731.5 110.8L731.5 119.5" stroke="#800000" stroke-width="1.2"/>
<path d="M726.2 119.5L735.8 119.5" stroke="#800000" stroke-width="1.2"/>
<text x="723.6" y="127" fill="#800000" stroke="#800000" textLength="15.1" lengthAdjust="spacingAndGlyphs">VCC</text>
<path d="M741.5 110.8L741.5 148.5" stroke="#000080" stroke-width="1.2"/>
<path d="M750.5 110.8L750.5 148.1" stroke="#000080" stroke-width="1.2"/>
<path d="M760.5 110.8L760.5 148.1" stroke="#000080" stroke-width="1.2"/>
<path d="M769.5 110.8L769.5 148.1" stroke="#000080" stroke-width="1.2"/>
<text x="747.1" y="147.4" fill="#800000" stroke="#800000" transform="rotate(-90 747.1 147.4)" textLength="13.2" lengthAdjust="spacingAndGlyphs" stroke-width="0.18">P10</text>
<text x="757.1" y="147.4" fill="#800000" stroke="#800000" transform="rotate(-90 757.1 147.4)" textLength="13.2" lengthAdjust="spacingAndGlyphs" stroke-width="0.18">P11</text>
<text x="766.2" y="147.4" fill="#800000" stroke="#800000" transform="rotate(-90 766.2 147.4)" textLength="13.2" lengthAdjust="spacingAndGlyphs" stroke-width="0.18">P12</text>
<path d="M693.5 186.5L779.5 186.5L779.5 110.5" stroke="#000080" stroke-width="1.2" fill="none" stroke-linejoin="miter"/>
<text x="703.5" y="184.5" fill="#800000" stroke="#800000" textLength="12.3" lengthAdjust="spacingAndGlyphs">P00</text>
<path d="M693.5 195.5L788.5 195.5L788.5 110.5" stroke="#000080" stroke-width="1.2" fill="none" stroke-linejoin="miter"/>
<text x="703.5" y="193.5" fill="#800000" stroke="#800000" textLength="12.3" lengthAdjust="spacingAndGlyphs">P01</text>
<path d="M693.5 205.5L798.5 205.5L798.5 110.5" stroke="#000080" stroke-width="1.2" fill="none" stroke-linejoin="miter"/>
<text x="703.5" y="203.5" fill="#800000" stroke="#800000" textLength="12.3" lengthAdjust="spacingAndGlyphs">P02</text>
<path d="M693.5 214.5L807.5 214.5L807.5 110.5" stroke="#000080" stroke-width="1.2" fill="none" stroke-linejoin="miter"/>
<text x="703.5" y="212.5" fill="#800000" stroke="#800000" textLength="12.3" lengthAdjust="spacingAndGlyphs">P03</text>
<path d="M693.5 224.5L817.5 224.5L817.5 110.5" stroke="#000080" stroke-width="1.2" fill="none" stroke-linejoin="miter"/>
<text x="703.5" y="222.5" fill="#800000" stroke="#800000" textLength="12.3" lengthAdjust="spacingAndGlyphs">P04</text>
<path d="M693.5 233.5L826.5 233.5L826.5 110.5" stroke="#000080" stroke-width="1.2" fill="none" stroke-linejoin="miter"/>
<text x="703.5" y="231.5" fill="#800000" stroke="#800000" textLength="12.3" lengthAdjust="spacingAndGlyphs">P05</text>
<path d="M693.5 243.5L836.5 243.5L836.5 110.5" stroke="#000080" stroke-width="1.2" fill="none" stroke-linejoin="miter"/>
<text x="703.5" y="241.5" fill="#800000" stroke="#800000" textLength="12.3" lengthAdjust="spacingAndGlyphs">P06</text>
<path d="M693.5 252.5L845.5 252.5L845.5 110.5" stroke="#000080" stroke-width="1.2" fill="none" stroke-linejoin="miter"/>
<text x="703.5" y="250.5" fill="#800000" stroke="#800000" textLength="12.3" lengthAdjust="spacingAndGlyphs">P07</text>
<path d="M855.5 110.8L855.5 138.5" stroke="#000080" stroke-width="1.2"/>
<path d="M855.5 138.5L855.5 148.5" stroke="#800000" stroke-width="1.2"/>
<path d="M850.4 148.5L859.4 148.5" stroke="#800000" stroke-width="1.2"/>
<text x="847.3" y="155.8" fill="#800000" stroke="#800000" textLength="15.8" lengthAdjust="spacingAndGlyphs">VCC</text>
<path d="M864.5 110.8L864.5 119.5" stroke="#800000" stroke-width="1.2"/>
<path d="M855.1 119.5L873.9 119.5" stroke="#800000" stroke-width="1.2"/>
<path d="M858.1 122.5L870.9 122.5" stroke="#800000" stroke-width="1.2"/>
<path d="M861 125.5L868 125.5" stroke="#800000" stroke-width="1.2"/>
<path d="M863.5 128.5L865.5 128.5" stroke="#800000" stroke-width="1.2"/>
<text x="855.9" y="137.1" fill="#800000" stroke="#800000" textLength="16.6" lengthAdjust="spacingAndGlyphs">GND</text>
<text x="115.6" y="363.8" fill="#800000" stroke="#800000" textLength="15.7" lengthAdjust="spacingAndGlyphs">VCC</text>
<path d="M118.3 366.5L127.5 366.5" stroke="#800000" stroke-width="1.2"/>
<path d="M123.5 366.5L123.5 376.5" stroke="#800000" stroke-width="1.2"/>
<path d="M123.5 376.5L123.5 385" stroke="#000000" stroke-width="1.2"/>
<path d="M123.5 385L123.5 392.5" stroke="#0000FF" stroke-width="1.2"/>
<polygon points="113.9,392.1 132.3,392.1 123.2,401.2" fill="#0000FF"/>
<path d="M113.9 401.6L132.3 401.6" stroke="#0000FF" stroke-width="2"/>
<path d="M123.5 402.4L123.5 414" stroke="#0000FF" stroke-width="1.2"/>
<path d="M123.5 414L123.5 442.6" stroke="#000000" stroke-width="1.2"/>
<rect x="120.5" y="442.5" width="6" height="29" fill="#FFFCF8" stroke="#0000FF" stroke-width="1.3"/>
<path d="M123.5 471.2L123.5 490.5" stroke="#000000" stroke-width="1.2"/>
<path d="M123.5 490.5L123.5 499.5" stroke="#800000" stroke-width="1.2"/>
<path d="M114.1 499.5L132.9 499.5" stroke="#800000" stroke-width="1.2"/>
<path d="M117.1 502.5L129.9 502.5" stroke="#800000" stroke-width="1.2"/>
<path d="M120 505.5L127 505.5" stroke="#800000" stroke-width="1.2"/>
<path d="M122.5 507.5L124.5 507.5" stroke="#800000" stroke-width="1.2"/>
<path d="M135.3 396.2L139.42 400.02" stroke="#0000FF" stroke-width="1.2"/>
<polygon points="140.9,401.5 137.2,401.5 140.9,397.8" fill="#0000FF"/>
<path d="M135.3 403.4L139.42 407.22" stroke="#0000FF" stroke-width="1.2"/>
<polygon points="140.9,408.7 137.2,408.7 140.9,405" fill="#0000FF"/>
<text x="141.3" y="391.7" fill="#000080" stroke="#000080" textLength="9.3" lengthAdjust="spacingAndGlyphs">D1</text>
<text x="141.3" y="400.6" fill="#000080" stroke="#000080" textLength="15.3" lengthAdjust="spacingAndGlyphs">LED</text>
<text x="127" y="448.5" fill="#000080" stroke="#000080" textLength="8.8" lengthAdjust="spacingAndGlyphs">R6</text>
<text x="127.8" y="458.2" fill="#000080" stroke="#000080" textLength="5.8" lengthAdjust="spacingAndGlyphs">1k</text>
<path d="M263.8 433.5L283.4 433.5" stroke="#000000" stroke-width="1.2"/>
<path d="M263.8 442.5L283.4 442.5" stroke="#000000" stroke-width="1.2"/>
<path d="M263.8 452.5L283.4 452.5" stroke="#000000" stroke-width="1.2"/>
<path d="M263.8 461.5L283.4 461.5" stroke="#000000" stroke-width="1.2"/>
<path d="M263.8 471.5L283.4 471.5" stroke="#000000" stroke-width="1.2"/>
<path d="M263.8 480.5L283.4 480.5" stroke="#000000" stroke-width="1.2"/>
<rect x="245.5" y="424.5" width="18" height="64" fill="#FFFFB0" stroke="#800000" stroke-width="1.35"/>
<text x="256" y="436" fill="#000000" stroke="#000000" text-anchor="middle">1</text>
<text x="256" y="445.5" fill="#000000" stroke="#000000" text-anchor="middle">2</text>
<text x="256" y="455.1" fill="#000000" stroke="#000000" text-anchor="middle">3</text>
<text x="256" y="464.5" fill="#000000" stroke="#000000" text-anchor="middle">4</text>
<text x="256" y="474.1" fill="#000000" stroke="#000000" text-anchor="middle">5</text>
<text x="256" y="483.3" fill="#000000" stroke="#000000" text-anchor="middle">6</text>
<path d="M283.5 442.5L319.5 442.5L319.5 480.5L317.5 480.5" stroke="#000080" stroke-width="1.2" fill="none" stroke-linejoin="miter"/>
<path d="M283.4 452.5L292.9 452.5" stroke="#000080" stroke-width="1.2"/>
<path d="M283.4 461.5L293.8 461.5" stroke="#000080" stroke-width="1.2"/>
<path d="M283.4 471.5L293.8 471.5" stroke="#000080" stroke-width="1.2"/>
<path d="M283.4 480.5L292.9 480.5" stroke="#000080" stroke-width="1.2"/>
<path d="M292.9 480.5L298.3 480.5" stroke="#000000" stroke-width="1.2"/>
<path d="M312.6 480.5L317.1 480.5" stroke="#000000" stroke-width="1.2"/>
<rect x="298.5" y="478.5" width="14" height="5" fill="#FFFCF8" stroke="#0000FF" stroke-width="1.3"/>
<text x="283.4" y="440" fill="#800000" stroke="#800000" textLength="15.8" lengthAdjust="spacingAndGlyphs">VCC</text>
<text x="283.4" y="449.5" fill="#800000" stroke="#800000" textLength="20.2" lengthAdjust="spacingAndGlyphs">TXD1</text>
<text x="283.4" y="458.9" fill="#800000" stroke="#800000" textLength="20.2" lengthAdjust="spacingAndGlyphs">RXD1</text>
<text x="283.4" y="468.8" fill="#800000" stroke="#800000" textLength="17" lengthAdjust="spacingAndGlyphs">GND</text>
<text x="283.4" y="477.2" fill="#800000" stroke="#800000" textLength="9.8" lengthAdjust="spacingAndGlyphs">EN</text>
<text x="297.4" y="474.7" fill="#000080" stroke="#000080" textLength="8.9" lengthAdjust="spacingAndGlyphs">R7</text>
<text x="297.9" y="491.8" fill="#000080" stroke="#000080" textLength="12.4" lengthAdjust="spacingAndGlyphs">10K</text>
<text x="245.6" y="421.7" fill="#000080" stroke="#000080" textLength="9" lengthAdjust="spacingAndGlyphs">U3</text>
<text x="245.6" y="495.9" fill="#000080" stroke="#000080" textLength="14" lengthAdjust="spacingAndGlyphs">GPS</text>
<text x="260.1" y="524.8" fill="#FF0000" stroke="#FF0000" textLength="21.5" lengthAdjust="spacingAndGlyphs" font-size="13.2" stroke-width="0">GPS</text>
<path d="M474.5 480.5L474.5 433.5L491.5 433.5" stroke="#000080" stroke-width="1.2" fill="none" stroke-linejoin="miter"/>
<path d="M493.6 433.5L502.9 433.5" stroke="#000000" stroke-width="1.2"/>
<path d="M502.9 433.5L510.4 433.5" stroke="#0000FF" stroke-width="1.2"/>
<polygon points="510.2,424.2 510.2,442 519.4,433.5" fill="#0000FF"/>
<path d="M520.2 424.2L520.2 442" stroke="#0000FF" stroke-width="2"/>
<path d="M521 433.5L531.1 433.5" stroke="#0000FF" stroke-width="1.2"/>
<path d="M531.1 433.5L541 433.5" stroke="#000000" stroke-width="1.2"/>
<path d="M541.9 433.5L560.2 433.5" stroke="#000000" stroke-width="1.2"/>
<rect x="560.5" y="430.5" width="28" height="6" fill="#FFFCF8" stroke="#0000FF" stroke-width="1.3"/>
<path d="M588.7 433.5L607.3 433.5" stroke="#000000" stroke-width="1.2"/>
<path d="M607.3 433.5L617.4 433.5" stroke="#800000" stroke-width="1.2"/>
<path d="M617.5 424.1L617.5 442.9" stroke="#800000" stroke-width="1.2"/>
<path d="M620.5 427.1L620.5 439.9" stroke="#800000" stroke-width="1.2"/>
<path d="M623.5 430L623.5 437" stroke="#800000" stroke-width="1.2"/>
<path d="M626.5 432.5L626.5 434.5" stroke="#800000" stroke-width="1.2"/>
<path d="M513.3 420.8L517.42 417.68" stroke="#0000FF" stroke-width="1.2"/>
<polygon points="518.9,416.2 515.2,416.2 518.9,419.9" fill="#0000FF"/>
<path d="M521.2 420.8L525.42 417.68" stroke="#0000FF" stroke-width="1.2"/>
<polygon points="526.9,416.2 523.2,416.2 526.9,419.9" fill="#0000FF"/>
<text x="502.3" y="412.8" fill="#000080" stroke="#000080" textLength="9.4" lengthAdjust="spacingAndGlyphs">D2</text>
<text x="502.3" y="449.7" fill="#000080" stroke="#000080" textLength="15.5" lengthAdjust="spacingAndGlyphs">LED</text>
<text x="559.3" y="426.7" fill="#000080" stroke="#000080" textLength="8.5" lengthAdjust="spacingAndGlyphs">R5</text>
<text x="560" y="443.8" fill="#000080" stroke="#000080" textLength="6.1" lengthAdjust="spacingAndGlyphs">1k</text>
<rect x="436.5" y="471.5" width="18" height="37" fill="#FFFFB0" stroke="#800000" stroke-width="1.35"/>
<path d="M454.8 480.5L474.4 480.5" stroke="#000000" stroke-width="1.2"/>
<text x="447.2" y="483.3" fill="#000000" stroke="#000000" text-anchor="middle">1</text>
<path d="M454.8 490.5L474.4 490.5" stroke="#000000" stroke-width="1.2"/>
<text x="447.2" y="493" fill="#000000" stroke="#000000" text-anchor="middle">2</text>
<path d="M454.8 499.5L474.4 499.5" stroke="#000000" stroke-width="1.2"/>
<text x="447.2" y="501.9" fill="#000000" stroke="#000000" text-anchor="middle">3</text>
<path d="M474.5 490.3L474.5 499.2" stroke="#000080" stroke-width="1.2"/>
<circle cx="474.5" cy="480.5" r="1.6" fill="#000080"/>
<circle cx="474.5" cy="490.5" r="1.6" fill="#000080"/>
<circle cx="474.5" cy="499.5" r="1.6" fill="#000080"/>
<path d="M474.5 499.2L474.5 509.4" stroke="#800000" stroke-width="1.2"/>
<path d="M465 509.5L483.8 509.5" stroke="#800000" stroke-width="1.2"/>
<path d="M468 512.5L480.8 512.5" stroke="#800000" stroke-width="1.2"/>
<path d="M470.9 515.5L477.9 515.5" stroke="#800000" stroke-width="1.2"/>
<path d="M473.4 518.5L475.4 518.5" stroke="#800000" stroke-width="1.2"/>
<path d="M474.4 480.5L503.5 480.5" stroke="#000080" stroke-width="1.2"/>
<path d="M474.4 490.5L502.3 490.5" stroke="#000080" stroke-width="1.2"/>
<path d="M503.5 480.5L522.4 480.5" stroke="#000000" stroke-width="1.2"/>
<path d="M503.9 490.5L522.4 490.5" stroke="#000000" stroke-width="1.2"/>
<rect x="522.5" y="471.5" width="18" height="27" fill="#FFFFB0" stroke="#800000" stroke-width="1.35"/>
<text x="531.3" y="483.3" fill="#000000" stroke="#000000" text-anchor="middle">1</text>
<text x="531.3" y="493" fill="#000000" stroke="#000000" text-anchor="middle">2</text>
<text x="436.6" y="468.6" fill="#000080" stroke="#000080" textLength="6.2" lengthAdjust="spacingAndGlyphs">J4</text>
<text x="436.6" y="516" fill="#000080" stroke="#000080" textLength="19.8" lengthAdjust="spacingAndGlyphs">CON3</text>
<text x="522.4" y="468.6" fill="#000080" stroke="#000080" textLength="6.7" lengthAdjust="spacingAndGlyphs">J5</text>
<text x="522.4" y="506.8" fill="#000080" stroke="#000080" textLength="20.4" lengthAdjust="spacingAndGlyphs">CON2</text>
<rect x="722.5" y="433.5" width="18" height="56" fill="#FFFFB0" stroke="#800000" stroke-width="1.35"/>
<path d="M703.9 442.5L722.6 442.5" stroke="#000000" stroke-width="1.2"/>
<text x="730.6" y="445.2" fill="#000000" stroke="#000000" text-anchor="middle">1</text>
<path d="M685 442.5L703.9 442.5" stroke="#000080" stroke-width="1.2"/>
<path d="M703.9 452.5L722.6 452.5" stroke="#000000" stroke-width="1.2"/>
<text x="730.6" y="455.2" fill="#000000" stroke="#000000" text-anchor="middle">2</text>
<path d="M685 452.5L703.9 452.5" stroke="#000080" stroke-width="1.2"/>
<path d="M703.9 461.5L722.6 461.5" stroke="#000000" stroke-width="1.2"/>
<text x="730.6" y="464.2" fill="#000000" stroke="#000000" text-anchor="middle">3</text>
<path d="M703.9 471.5L722.6 471.5" stroke="#000000" stroke-width="1.2"/>
<text x="730.6" y="474.2" fill="#000000" stroke="#000000" text-anchor="middle">4</text>
<path d="M685 471.5L703.9 471.5" stroke="#000080" stroke-width="1.2"/>
<path d="M703.9 480.5L722.6 480.5" stroke="#000000" stroke-width="1.2"/>
<text x="730.6" y="483.2" fill="#000000" stroke="#000000" text-anchor="middle">5</text>
<path d="M685 480.5L703.9 480.5" stroke="#000080" stroke-width="1.2"/>
<path d="M685 471.5L674.6 471.5" stroke="#800000" stroke-width="1.2"/>
<path d="M674.5 461.6L674.5 480.4" stroke="#800000" stroke-width="1.2"/>
<path d="M671.5 464.6L671.5 477.4" stroke="#800000" stroke-width="1.2"/>
<path d="M668.5 467.5L668.5 474.5" stroke="#800000" stroke-width="1.2"/>
<path d="M665.5 470L665.5 472" stroke="#800000" stroke-width="1.2"/>
<text x="645.3" y="473.8" fill="#800000" stroke="#800000" textLength="16.7" lengthAdjust="spacingAndGlyphs">GND</text>
<text x="684.6" y="439.5" fill="#800000" stroke="#800000" textLength="16.4" lengthAdjust="spacingAndGlyphs">TXD</text>
<text x="684.3" y="449.6" fill="#800000" stroke="#800000" textLength="16.7" lengthAdjust="spacingAndGlyphs">RXD</text>
<text x="685" y="477.8" fill="#800000" stroke="#800000" textLength="11" lengthAdjust="spacingAndGlyphs">vcc</text>
<text x="722.6" y="431.1" fill="#000080" stroke="#000080" textLength="6" lengthAdjust="spacingAndGlyphs">J3</text>
<text x="722.3" y="496.7" fill="#000080" stroke="#000080" textLength="20.4" lengthAdjust="spacingAndGlyphs">CON5</text>
<path d="M818.2 423.5L846.4 423.5" stroke="#000080" stroke-width="1.2"/>
<path d="M846.4 423.5L855.2 423.5" stroke="#000000" stroke-width="1.2"/>
<rect x="855.5" y="420.5" width="28" height="6" fill="#FFFCF8" stroke="#0000FF" stroke-width="1.3"/>
<path d="M883.5 423.5L892.5 423.5" stroke="#000000" stroke-width="1.2"/>
<path d="M893.8 423.5L912.4 423.5" stroke="#000000" stroke-width="1.2"/>
<path d="M912.4 423.5L924.5 423.5" stroke="#0000FF" stroke-width="1.2"/>
<circle cx="930.9" cy="422.8" r="18.7" fill="none" stroke="#0000FF" stroke-width="0.95"/>
<path d="M925.7 411.2L925.7 436.4" stroke="#0000FF" stroke-width="3"/>
<path d="M927.2 418.3L940.3 407.4" stroke="#0000FF" stroke-width="1.1"/>
<path d="M927.2 427L940.3 438.2" stroke="#0000FF" stroke-width="1.1"/>
<polygon points="927.6,418.2 934.8,410.6 936.4,414.6" fill="#0000FF"/>
<text x="817.3" y="420.8" fill="#800000" stroke="#800000" textLength="12.6" lengthAdjust="spacingAndGlyphs">P20</text>
<text x="854.2" y="417.9" fill="#000080" stroke="#000080" textLength="8.6" lengthAdjust="spacingAndGlyphs">R4</text>
<text x="854.2" y="435" fill="#000080" stroke="#000080" textLength="15.5" lengthAdjust="spacingAndGlyphs">4.7K</text>
<text x="900.6" y="420.8" fill="#000000" stroke="#000000">1</text>
<text x="917.8" y="425.5" fill="#000000" stroke="#000000" textLength="5" lengthAdjust="spacingAndGlyphs">B</text>
<text x="942" y="416.4" fill="#000000" stroke="#000000" transform="rotate(-90 942 416.4)" stroke-width="0.18">E</text>
<text x="942" y="436.2" fill="#000000" stroke="#000000" transform="rotate(-90 942 436.2)" stroke-width="0.18">C</text>
<text x="932.3" y="374" fill="#800000" stroke="#800000" textLength="15.8" lengthAdjust="spacingAndGlyphs">VCC</text>
<path d="M935 376.5L944.6 376.5" stroke="#800000" stroke-width="1.2"/>
<path d="M940.5 376.5L940.5 385.5" stroke="#800000" stroke-width="1.2"/>
<path d="M940.5 385.5L940.5 407.2" stroke="#000000" stroke-width="1.2"/>
<text x="936.8" y="396.4" fill="#000000" stroke="#000000" transform="rotate(-90 936.8 396.4)" stroke-width="0.18">2</text>
<text x="936.8" y="454.8" fill="#000000" stroke="#000000" transform="rotate(-90 936.8 454.8)" stroke-width="0.18">3</text>
<text x="950.8" y="410.8" fill="#000080" stroke="#000080" textLength="18.3" lengthAdjust="spacingAndGlyphs">PNP1</text>
<text x="950.8" y="420.1" fill="#000080" stroke="#000080" textLength="14.7" lengthAdjust="spacingAndGlyphs">PNP</text>
<path d="M940.5 438L940.5 444.4" stroke="#0000FF" stroke-width="1.2"/>
<path d="M959.5 460.5L940.5 460.5L940.5 444.5" stroke="#000000" stroke-width="1.2" fill="none" stroke-linejoin="miter"/>
<path d="M942 452.5L949.6 452.5" stroke="#0000FF" stroke-width="1"/>
<path d="M945.5 449L945.5 456.6" stroke="#0000FF" stroke-width="1"/>
<path d="M940.3 471.5L959.1 471.5" stroke="#000000" stroke-width="1.2"/>
<path d="M940.5 470.9L940.5 499.5" stroke="#000080" stroke-width="1.2"/>
<path d="M940.5 499.5L940.5 509.5" stroke="#800000" stroke-width="1.2"/>
<path d="M930.9 509.5L949.7 509.5" stroke="#800000" stroke-width="1.2"/>
<path d="M933.9 512.5L946.7 512.5" stroke="#800000" stroke-width="1.2"/>
<path d="M936.8 515.5L943.8 515.5" stroke="#800000" stroke-width="1.2"/>
<path d="M939.3 518.5L941.3 518.5" stroke="#800000" stroke-width="1.2"/>
<text x="931.3" y="525.7" fill="#800000" stroke="#800000" textLength="17.5" lengthAdjust="spacingAndGlyphs">GND</text>
<rect x="959.5" y="459.5" width="13" height="14" fill="#FFFCF8" stroke="#0000FF" stroke-width="1.05"/>
<path d="M972.7 459.2L981.8 452.6L981.8 479.6L972.7 473.7" stroke="#0000FF" stroke-width="1" fill="none" stroke-linejoin="miter"/>
<path d="M579.3 169.55L582.26 169.55M580.86 167.8L580.86 174.8L579.92 174.1M579.3 172.35L582.26 171.3M583.59 167.8L583.59 174.8M585.54 167.8L585.54 174.8M582.42 169.34L583.59 169.34M582.42 171.3L583.59 171.3M582.42 173.26L583.59 173.26M585.54 169.34L587.1 169.34M585.54 171.3L587.1 171.3M585.54 173.26L587.1 173.26" stroke="#000080" stroke-width="0.9" fill="none"/>
<path d="M588.73 167.8L588.73 174.8M588.73 168.15L590.71 168.15L589.72 170.25L590.71 172L589.06 172.7M591.7 168.15L591.7 174.45M594.34 168.15L594.34 174.45M591.7 168.15L594.34 168.15M591.7 170.25L594.34 170.25M591.7 172.35L594.34 172.35M590.91 174.59L595 174.59" stroke="#000080" stroke-width="0.9" fill="none"/>
<text x="596.2" y="174.5" fill="#000080" stroke="#000080" textLength="10.8" lengthAdjust="spacingAndGlyphs">103</text>
<path d="M673.78 519.2L673.34 521.35M673.34 520.92L676.42 520.92M672.9 523.5L676.6 523.5M674.84 520.92L674.84 523.5L672.9 527.8M675.1 524.36L676.42 527.37M677.3 519.63L681.7 519.63M677.74 521.61L681.26 521.61L681.26 524.19L677.74 524.19L677.74 521.61M678.18 525.05L678.88 526.77M680.82 525.05L680.12 526.77M677.12 527.54L681.7 527.54" stroke="#000080" stroke-width="1" fill="none"/>
<path d="M684.9 519.2L682.7 523.07M684.02 521.78L684.02 527.8M687.54 519.2L688.42 520.06M685.78 520.75L691.5 520.75M686.66 522.3L690.62 522.3M686.66 523.67L690.62 523.67M686.66 525.22L690.62 525.22L690.62 527.63L686.66 527.63L686.66 525.22" stroke="#000080" stroke-width="1" fill="none"/>
<path d="M692.5 521.35L695.84 521.35M694.26 519.2L694.26 527.8M694.26 521.78L692.5 525.22M694.26 522.21L695.84 523.93M696.2 520.23L701.3 520.23M697.6 519.2L697.6 521.09M699.98 519.2L699.98 521.09M696.9 521.78L700.6 521.78L700.6 524.36L696.9 524.36L696.9 521.78M696.9 523.07L700.6 523.07M696.2 525.39L701.3 525.39M698.66 524.36L696.46 527.8M698.84 525.39L701.3 527.8" stroke="#000080" stroke-width="1" fill="none"/>
<path d="M702.3 521.78L705.47 521.78M703.88 519.63L703.88 526.08M702.3 526.51L705.47 525.05M706.26 521.35L710.4 521.35L710.4 523.93M705.64 523.93L711.1 523.93M708.28 519.2L708.28 523.93L705.82 527.8M708.46 524.36L711.1 527.8" stroke="#000080" stroke-width="1" fill="none"/>
<path d="M903.14 483.36L905.42 483.36L905.42 485.92L903.14 485.92L903.14 483.36M904.25 482.4L904.25 487.84M902.8 488.03L905.7 487.2M907.63 482.4L906.25 484.32M906.94 483.04L909.15 483.04L906.59 485.47M907.28 483.68L909.7 485.28M906.39 486.11L909.56 486.11M906.59 487.14L909.35 487.14M906.11 488.16L909.7 488.16M907.97 485.47L907.97 488.8" stroke="#000080" stroke-width="0.8" fill="none"/>
<path d="M910.64 484L912.71 484L912.71 486.88L910.64 486.88L910.64 484M914.99 482.4L914.5 483.17M913.81 483.36L916.71 483.36L916.71 485.28M913.81 483.36L913.81 485.6L917.26 485.6L917.26 488.16L916.37 488.8M914.99 484.19L915.47 484.7M913.26 487.2L916.37 487.2" stroke="#000080" stroke-width="0.8" fill="none"/>
<path d="M918.75 482.53L920.96 482.53L920.96 484.19L918.75 484.19L918.75 482.53M922.2 482.53L924.55 482.53L924.55 484.19L922.2 484.19L922.2 482.53M918.2 485.28L925.1 485.28M921.65 484.32L918.54 486.75M921.65 484.96L924.96 486.75M923.17 484.32L923.72 484.83M918.75 487.01L920.96 487.01L920.96 488.8L918.75 488.8L918.75 487.01M922.2 487.01L924.55 487.01L924.55 488.8L922.2 488.8L922.2 487.01" stroke="#000080" stroke-width="0.8" fill="none"/>
</svg>
</body></html>
